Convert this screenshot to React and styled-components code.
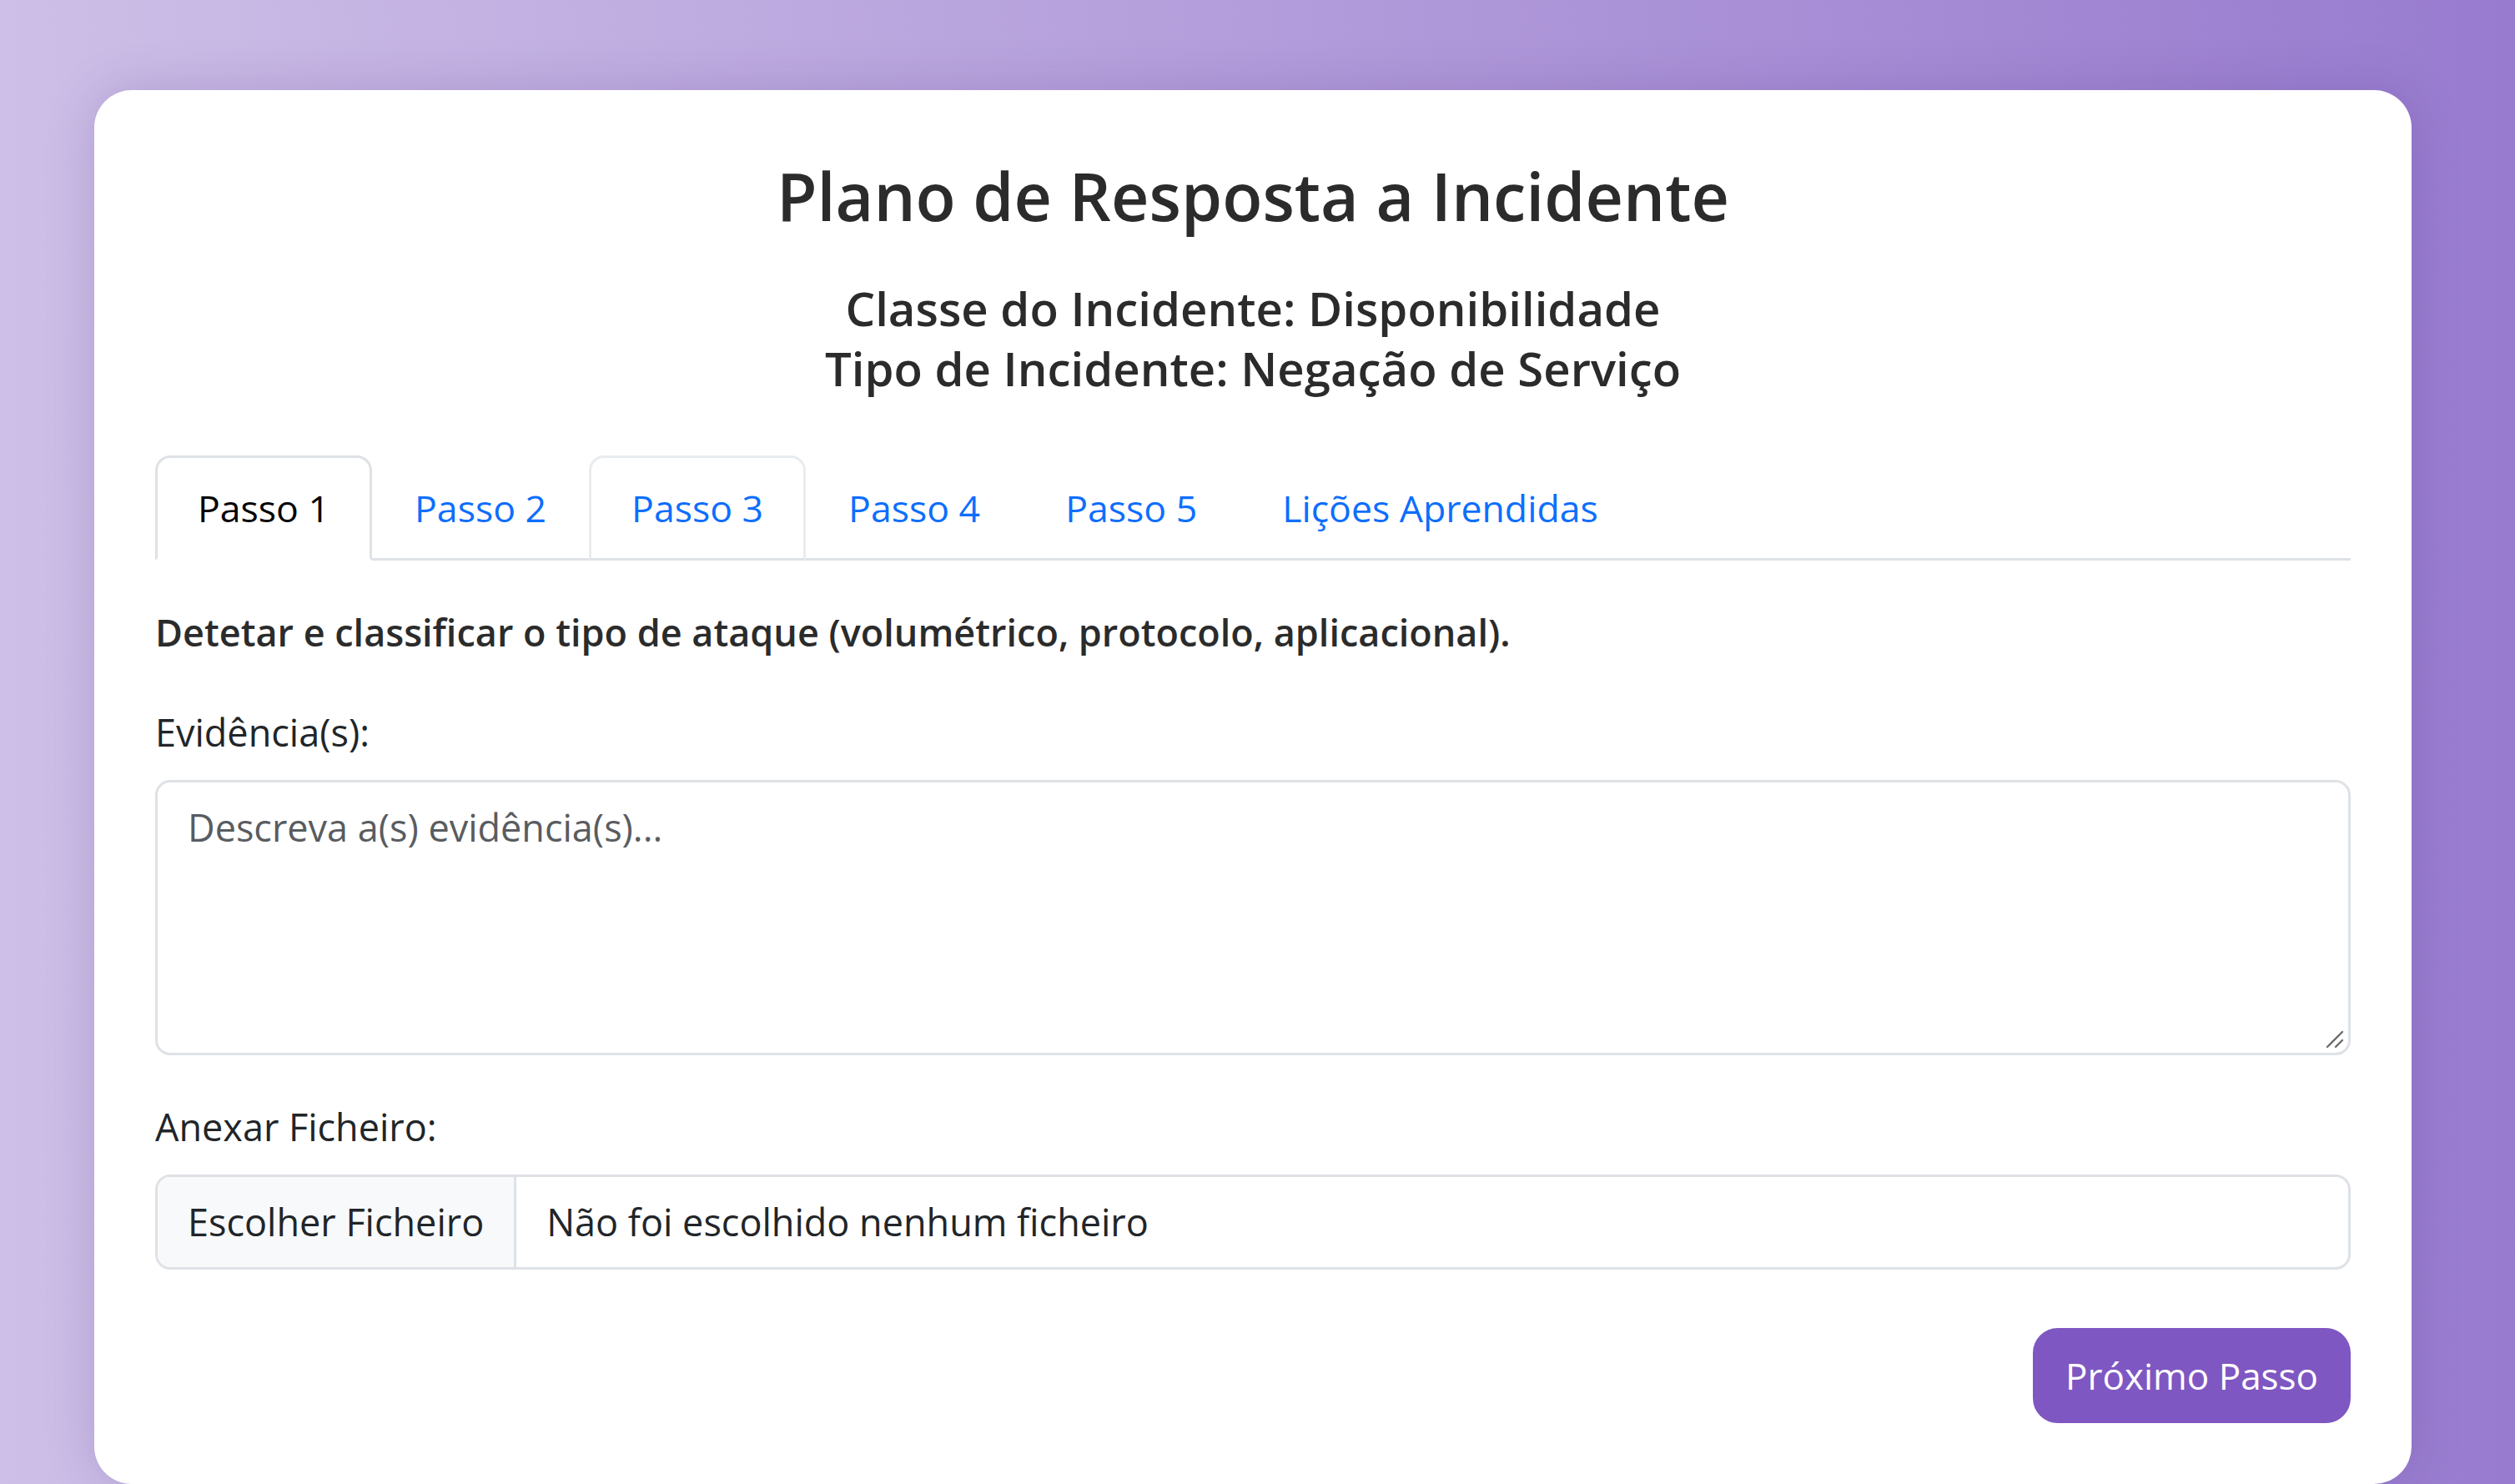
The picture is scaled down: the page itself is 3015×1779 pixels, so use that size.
import React from "react";
import styled, { createGlobalStyle } from "styled-components";

const GlobalStyle = createGlobalStyle`
    html, body {
        margin: 0;
        padding: 0;
    }
    body {
        font-family: "Open Sans", "Noto Sans", sans-serif;
        color: #212529;
        background: linear-gradient(to right, #cdbfe7 0%, #b39ddb 50%, #987bcf 100%);
        min-height: 100vh;
        overflow: hidden;
    }
    * {
        box-sizing: border-box;
    }
`;

const Page = styled.div`
    min-height: 100vh;
    padding: 108px 124px 0 113px;
`;

const Card = styled.div`
    background: #ffffff;
    border-radius: 45px;
    padding: 73px;
    box-shadow: 0 0 60px rgba(60, 30, 110, 0.18);
`;

const Title = styled.h2`
    margin: 0 0 44px;
    text-align: center;
    font-size: 79px;
    font-weight: 600;
    line-height: 108px;
    color: #2b2b2b;
`;

const Subtitle = styled.h5`
    margin: 0 0 69px;
    text-align: center;
    font-size: 56.3px;
    font-weight: 600;
    line-height: 72px;
    color: #2b2b2b;
`;

const Tabs = styled.ul`
    display: flex;
    margin: 0;
    padding: 0;
    list-style: none;
    border-bottom: 3px solid #dee2e6;
`;

const Tab = styled.li`
    margin-bottom: -3px;
    padding: 24px 48px;
    font-size: 44.6px;
    line-height: 72px;
    border: 3px solid transparent;
    border-radius: 18px 18px 0 0;
    color: ${(p) => (p.$active ? "#000000" : "#0d6efd")};
    background: ${(p) => (p.$active ? "#ffffff" : "transparent")};
    border-color: ${(p) =>
        p.$active
            ? "#dee2e6 #dee2e6 #ffffff"
            : p.$hover
            ? "#e9ecef #e9ecef #dee2e6"
            : "transparent"};
    cursor: pointer;
`;

const Pane = styled.div`
    padding-top: 50px;
`;

const Lead = styled.p`
    margin: 0 0 48px;
    font-size: 45px;
    font-weight: 600;
    line-height: 72px;
    color: #2b2b2b;
`;

const Label = styled.label`
    display: block;
    margin-bottom: 21px;
    font-size: 45px;
    line-height: 72px;
`;

const Field = styled.div`
    position: relative;
    margin-bottom: ${(p) => p.$gap || "50px"};
`;

const TextArea = styled.textarea`
    display: block;
    width: 100%;
    height: 330px;
    padding: 18px 36px;
    font-family: inherit;
    font-size: 45px;
    line-height: 72px;
    color: #212529;
    border: 3px solid #dee2e6;
    border-radius: 18px;
    resize: none;
    outline: none;

    &::placeholder {
        color: #595c5f;
    }
`;

const Grip = styled.svg`
    position: absolute;
    right: 8px;
    bottom: 8px;
    width: 22px;
    height: 22px;
`;

const FileBox = styled.div`
    display: flex;
    align-items: stretch;
    height: 114px;
    border: 3px solid #dee2e6;
    border-radius: 18px;
    overflow: hidden;
    font-size: 45px;
    line-height: 72px;
`;

const FileButton = styled.div`
    display: flex;
    align-items: center;
    padding: 0 36px;
    background: #f8f9fa;
    border-right: 3px solid #dee2e6;
`;

const FileName = styled.div`
    display: flex;
    align-items: center;
    padding: 0 36px;
`;

const Actions = styled.div`
    display: flex;
    justify-content: flex-end;
`;

const NextButton = styled.button`
    padding: 18px 36px;
    font-family: inherit;
    font-size: 44px;
    line-height: 72px;
    color: #ffffff;
    background: #7f57c2;
    border: 3px solid #7f57c2;
    border-radius: 30px;
    cursor: pointer;
`;

const tabs = ["Passo 1", "Passo 2", "Passo 3", "Passo 4", "Passo 5", "Lições Aprendidas"];

export default function App() {
    return (
        <>
            <GlobalStyle />
            <Page>
                <Card>
                    <Title>Plano de Resposta a Incidente</Title>
                    <Subtitle>
                        Classe do Incidente: Disponibilidade
                        <br />
                        Tipo de Incidente: Negação de Serviço
                    </Subtitle>
                    <Tabs>
                        {tabs.map((t, i) => (
                            <Tab key={t} $active={i === 0} $hover={i === 2}>
                                {t}
                            </Tab>
                        ))}
                    </Tabs>
                    <Pane>
                        <Lead>Detetar e classificar o tipo de ataque (volumétrico, protocolo, aplicacional).</Lead>
                        <Label>Evidência(s):</Label>
                        <Field>
                            <TextArea placeholder="Descreva a(s) evidência(s)..." />
                            <Grip viewBox="0 0 22 22">
                                <line x1="2" y1="20" x2="20" y2="2" stroke="#6b6b6b" strokeWidth="2.4" strokeLinecap="round" />
                                <line x1="12" y1="20" x2="20" y2="12" stroke="#6b6b6b" strokeWidth="2.4" strokeLinecap="round" />
                            </Grip>
                        </Field>
                        <Label>Anexar Ficheiro:</Label>
                        <Field $gap="70px">
                            <FileBox>
                                <FileButton>Escolher Ficheiro</FileButton>
                                <FileName>Não foi escolhido nenhum ficheiro</FileName>
                            </FileBox>
                        </Field>
                        <Actions>
                            <NextButton>Próximo Passo</NextButton>
                        </Actions>
                    </Pane>
                </Card>
            </Page>
        </>
    );
}
